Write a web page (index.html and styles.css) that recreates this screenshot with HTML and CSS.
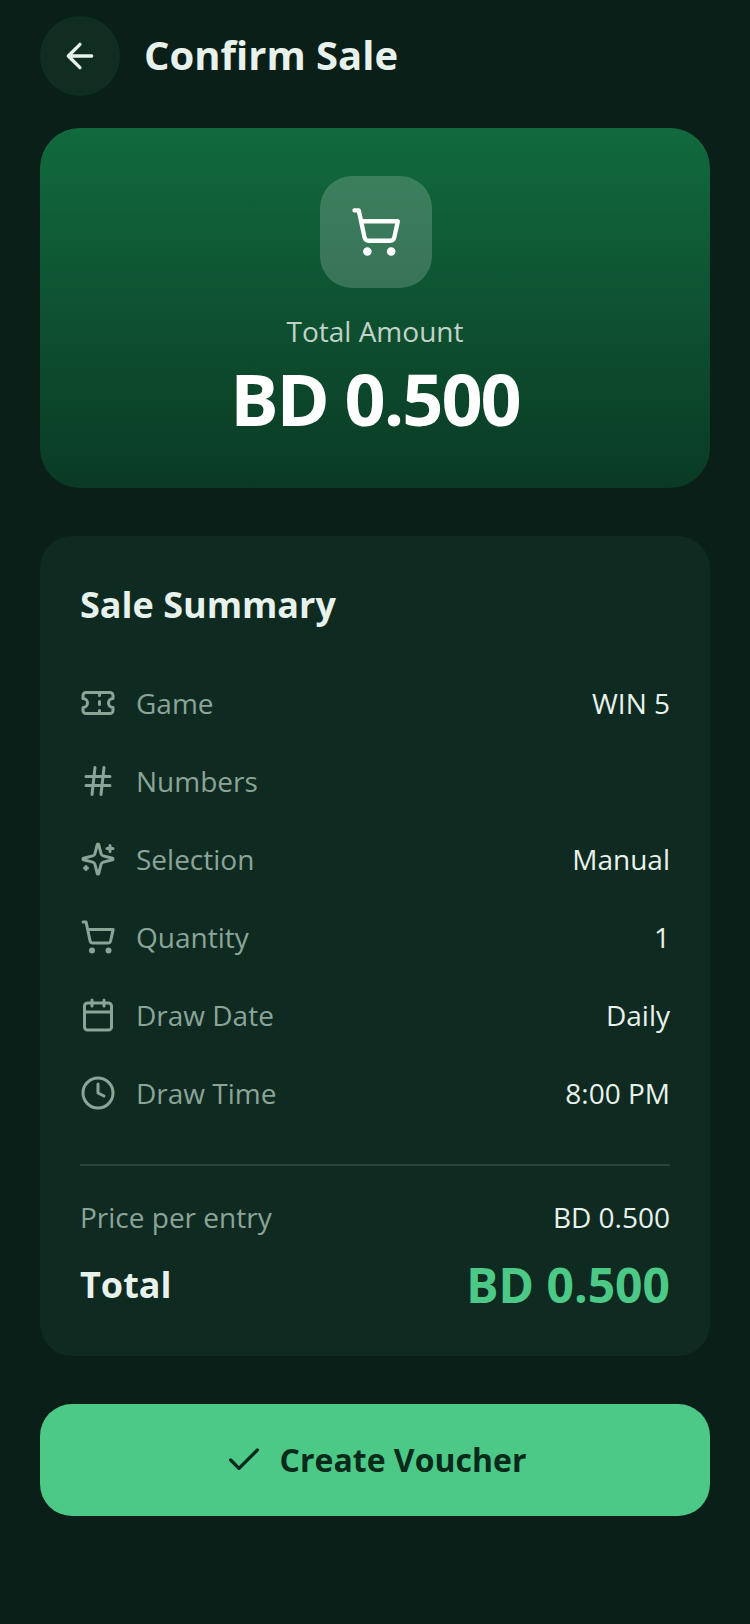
FILE: index.html
```html
<!DOCTYPE html>
<html lang="en">
<head>
    <meta charset="UTF-8">
    <meta name="viewport" content="width=device-width, initial-scale=1.0">
    <title>Confirm Sale</title>
    <link rel="stylesheet" href="styles.css">
</head>
<body>
    <!-- Header -->
    <div class="header">
        <div class="back">
            <svg viewBox="0 0 24 24" width="40" height="40"><path d="M19 12H5M12 5l-7 7 7 7"/></svg>
        </div>
        <h1>Confirm Sale</h1>
    </div>

    <!-- Total Amount -->
    <div class="hero">
        <div class="hero-icon">
            <svg viewBox="0 0 24 24" width="52" height="52"><circle cx="8" cy="21" r="1"/><circle cx="19" cy="21" r="1"/><path d="M2.05 2.05h2l2.66 12.42a2 2 0 0 0 2 1.58h9.78a2 2 0 0 0 1.95-1.57l1.65-7.43H5.12"/></svg>
        </div>
        <div class="hero-label">Total Amount</div>
        <div class="hero-value">BD 0.500</div>
    </div>

    <!-- Summary -->
    <div class="card">
        <h2>Sale Summary</h2>
        <div class="rows">
            <div class="row">
                <svg viewBox="0 0 24 24" width="36" height="36"><path d="M2 9a3 3 0 0 1 0 6v2a2 2 0 0 0 2 2h16a2 2 0 0 0 2-2v-2a3 3 0 0 1 0-6V7a2 2 0 0 0-2-2H4a2 2 0 0 0-2 2Z"/><path d="M13 5v2M13 17v2M13 11v2"/></svg>
                <span class="label">Game</span>
                <span class="value">WIN 5</span>
            </div>
            <div class="row">
                <svg viewBox="0 0 24 24" width="36" height="36"><path d="M4 9h16M4 15h16M10 3 8 21M16 3l-2 18"/></svg>
                <span class="label">Numbers</span>
            </div>
            <div class="row">
                <svg viewBox="0 0 24 24" width="36" height="36"><path d="M9.94 15.5A2 2 0 0 0 8.5 14.06l-6.14-1.58a.5.5 0 0 1 0-.96L8.5 9.94A2 2 0 0 0 9.94 8.5l1.58-6.14a.5.5 0 0 1 .96 0L14.06 8.5A2 2 0 0 0 15.5 9.94l6.14 1.58a.5.5 0 0 1 0 .96L15.5 14.06a2 2 0 0 0-1.44 1.44l-1.58 6.14a.5.5 0 0 1-.96 0Z"/><path d="M20 3v4M22 5h-4M4 17v2M5 18H3"/></svg>
                <span class="label">Selection</span>
                <span class="value">Manual</span>
            </div>
            <div class="row">
                <svg viewBox="0 0 24 24" width="36" height="36"><circle cx="8" cy="21" r="1"/><circle cx="19" cy="21" r="1"/><path d="M2.05 2.05h2l2.66 12.42a2 2 0 0 0 2 1.58h9.78a2 2 0 0 0 1.95-1.57l1.65-7.43H5.12"/></svg>
                <span class="label">Quantity</span>
                <span class="value">1</span>
            </div>
            <div class="row">
                <svg viewBox="0 0 24 24" width="36" height="36"><path d="M8 2v4M16 2v4"/><rect x="3" y="4" width="18" height="18" rx="2"/><path d="M3 10h18"/></svg>
                <span class="label">Draw Date</span>
                <span class="value">Daily</span>
            </div>
            <div class="row">
                <svg viewBox="0 0 24 24" width="36" height="36"><circle cx="12" cy="12" r="10"/><path d="M12 6v6l4 2"/></svg>
                <span class="label">Draw Time</span>
                <span class="value">8:00 PM</span>
            </div>
        </div>
        <div class="divider"></div>
        <div class="price-row">
            <span class="label">Price per entry</span>
            <span class="value">BD 0.500</span>
        </div>
        <div class="total-row">
            <span class="total-label">Total</span>
            <span class="total-value">BD 0.500</span>
        </div>
    </div>

    <!-- Action -->
    <div class="action">
        <svg viewBox="0 0 24 24" width="40" height="40"><path d="M20 6 9 17l-5-5"/></svg>
        <span class="action-text">Create Voucher</span>
    </div>
</body>
</html>
```
FILE: styles.css
```css
/* General */
html, body {
    margin: 0;
    padding: 0;
}

body {
    width: 750px;
    height: 1624px;
    box-sizing: border-box;
    padding: 16px 40px 0;
    background: #0a1f18;
    font-family: "Open Sans", sans-serif;
    color: #e8f2ec;
    overflow: hidden;
}

svg {
    fill: none;
    stroke: currentColor;
    stroke-width: 2;
    stroke-linecap: round;
    stroke-linejoin: round;
    flex-shrink: 0;
}

/* Header */
.header {
    display: flex;
    align-items: center;
    gap: 24px;
    height: 80px;
}

.back {
    width: 80px;
    height: 80px;
    border-radius: 50%;
    background: #102d21;
    display: flex;
    align-items: center;
    justify-content: center;
    color: #e8f2ec;
}

.header h1 {
    margin: 0 0 3px;
    font-size: 40px;
    font-weight: 700;
}

/* Hero */
.hero {
    margin-top: 32px;
    height: 360px;
    box-sizing: border-box;
    padding-top: 48px;
    border-radius: 40px;
    background: linear-gradient(180deg, #116a3e 0%, #0a3a24 100%);
    display: flex;
    flex-direction: column;
    align-items: center;
    color: #fff;
}

.hero-icon {
    width: 112px;
    height: 112px;
    margin-left: 2px;
    border-radius: 32px;
    background: rgba(255, 255, 255, 0.18);
    display: flex;
    align-items: center;
    justify-content: center;
}

.hero-label {
    margin-top: 24px;
    font-size: 28px;
    line-height: 38px;
    color: rgba(255, 255, 255, 0.75);
}

.hero-value {
    font-size: 72px;
    line-height: 96px;
    font-weight: 700;
    letter-spacing: -2px;
}

/* Summary card */
.card {
    margin-top: 48px;
    padding: 45px 40px 39px;
    border-radius: 32px;
    background: #0f2a20;
}

.card h2 {
    margin: 0 0 35px;
    font-size: 36px;
    line-height: 48px;
    font-weight: 700;
}

.row {
    display: flex;
    align-items: center;
    height: 78px;
    color: #8aa598;
}

.row svg {
    margin-right: 20px;
}

.label {
    font-size: 28px;
    color: #8aa598;
}

.value {
    margin-left: auto;
    font-size: 28px;
    color: #e8f2ec;
}

.divider {
    margin-top: 32px;
    height: 2px;
    background: #2a4439;
}

.price-row, .total-row {
    display: flex;
    align-items: center;
    justify-content: space-between;
}

.price-row {
    margin-top: 32px;
}

.total-row {
    margin-top: 16px;
}

.total-label {
    font-size: 36px;
    font-weight: 700;
}

.total-value {
    font-size: 48px;
    font-weight: 700;
    color: #4dc987;
}

/* Button */
.action {
    margin-top: 48px;
    height: 112px;
    border-radius: 32px;
    background: #4dc987;
    color: #082a1b;
    display: flex;
    align-items: center;
    justify-content: center;
    gap: 16px;
    font-size: 32px;
    font-weight: 700;
}

.action-text {
    margin-bottom: 2px;
}
```
